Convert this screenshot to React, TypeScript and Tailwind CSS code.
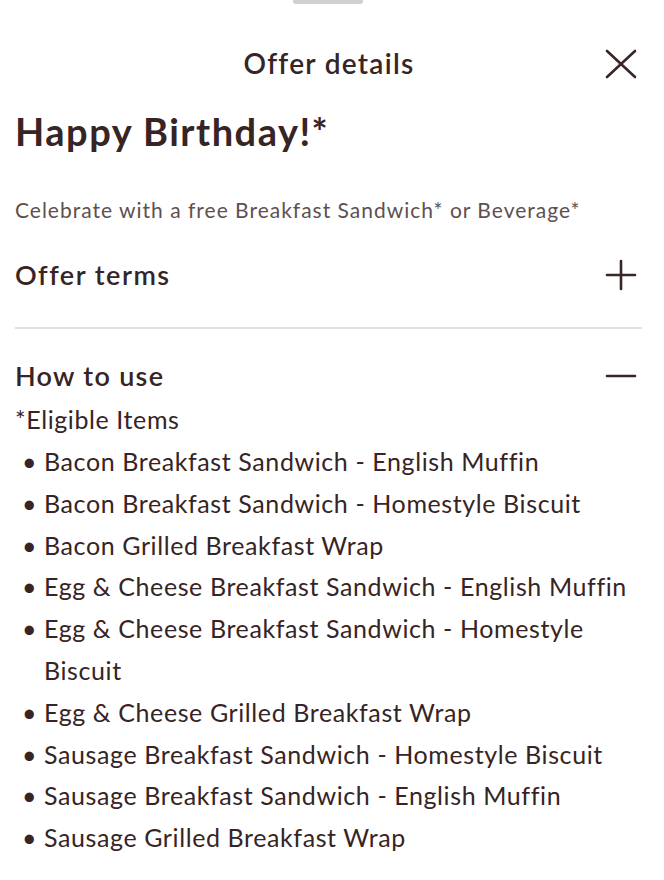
import React from 'react';

const items = [
  'Bacon Breakfast Sandwich - English Muffin',
  'Bacon Breakfast Sandwich - Homestyle Biscuit',
  'Bacon Grilled Breakfast Wrap',
  'Egg & Cheese Breakfast Sandwich - English Muffin',
  'Egg & Cheese Breakfast Sandwich - Homestyle Biscuit',
  'Egg & Cheese Grilled Breakfast Wrap',
  'Sausage Breakfast Sandwich - Homestyle Biscuit',
  'Sausage Breakfast Sandwich - English Muffin',
  'Sausage Grilled Breakfast Wrap',
];

const Icon: React.FC<{ kind: 'x' | 'plus' | 'minus' }> = ({ kind }) => (
  <svg width="32" height="32" viewBox="0 0 32 32" fill="none" stroke="#3a2626" strokeWidth="2.6" strokeLinecap="round">
    {kind === 'x' && (
      <>
        <line x1="2" y1="3" x2="30" y2="29" />
        <line x1="30" y1="3" x2="2" y2="29" />
      </>
    )}
    {kind === 'plus' && (
      <>
        <line x1="16" y1="2" x2="16" y2="30" />
        <line x1="2" y1="16" x2="30" y2="16" />
      </>
    )}
    {kind === 'minus' && <line x1="2" y1="16" x2="30" y2="16" />}
  </svg>
);

const App: React.FC = () => {
  return (
    <div className="w-[664px] h-[880px] bg-white overflow-hidden text-[#372424]" style={{ fontFamily: 'Lato, "Open Sans", sans-serif' }}>
      <div className="w-[70px] h-[4px] ml-[293px] bg-[#d4cfcf] rounded-b-[3px]" />

      <div className="relative flex items-center justify-center h-[50px] mt-[34px]">
        <h1 className="text-[28px] font-semibold tracking-[1.3px] -ml-[6px]">Offer details</h1>
        <button className="absolute right-[27px] top-[10px]">
          <Icon kind="x" />
        </button>
      </div>

      <div className="pl-[15px] pr-[22px]">
        <h2 className="text-[38px] font-bold leading-[44px] mt-[21px] tracking-[1.5px]">Happy Birthday!*</h2>
        <p className="text-[21px] text-[#5e5050] mt-[43px] leading-[28px] tracking-[1px]">
          Celebrate with a free Breakfast Sandwich* or Beverage*
        </p>

        <div className="flex items-center justify-between mt-[31px] h-[40px]">
          <span className="text-[27px] font-semibold tracking-[1.5px]">Offer terms</span>
          <span className="mr-[5px]"><Icon kind="plus" /></span>
        </div>
        <div className="h-[2px] bg-[#e2e0e0] mt-[32px]" />

        <div className="flex items-center justify-between mt-[27px] h-[40px]">
          <span className="text-[27px] font-semibold tracking-[1.3px]">How to use</span>
          <span className="mr-[5px]"><Icon kind="minus" /></span>
        </div>
        <p className="text-[25px] leading-[42px] tracking-[0.6px] mt-[2px]">*Eligible Items</p>
        <ul className="text-[25px] leading-[41.8px] tracking-[0.6px] mt-[1px]">
          {items.map((it) => (
            <li key={it} className="flex">
              <span className="w-[29px] shrink-0 pl-[7px]">•</span>
              <span className="pr-[8px]">{it}</span>
            </li>
          ))}
        </ul>
      </div>
    </div>
  );
};

export default App;
